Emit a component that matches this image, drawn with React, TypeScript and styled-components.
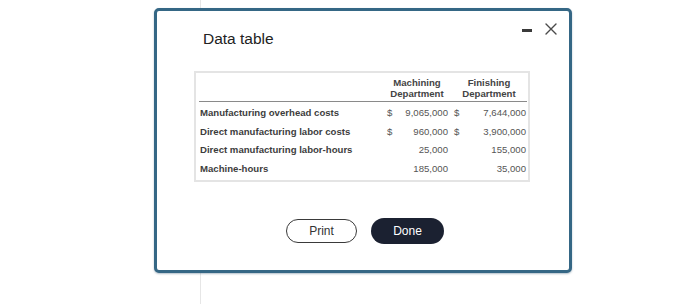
import { Fragment } from "react";
import styled, { createGlobalStyle } from "styled-components";

const GlobalStyle = createGlobalStyle`
  html, body {
    margin: 0;
    padding: 0;
    background: #ffffff;
    font-family: "Liberation Sans", Arial, sans-serif;
  }
`;

type Row = {
  label: string;
  machining: string;
  finishing: string;
  currency?: boolean;
};

const ROWS: Row[] = [
  { label: "Manufacturing overhead costs", machining: "9,065,000", finishing: "7,644,000", currency: true },
  { label: "Direct manufacturing labor costs", machining: "960,000", finishing: "3,900,000", currency: true },
  { label: "Direct manufacturing labor-hours", machining: "25,000", finishing: "155,000" },
  { label: "Machine-hours", machining: "185,000", finishing: "35,000" },
];

const Page = styled.div`
  box-sizing: border-box;
  height: 304px;
  padding: 8px 0 0 154px;
  background-image: linear-gradient(#e6e6e6, #e6e6e6);
  background-size: 1px 100%;
  background-position: 200px 0;
  background-repeat: no-repeat;
`;

const Dialog = styled.section`
  box-sizing: border-box;
  width: 418px;
  height: 265px;
  padding: 0 12px 0 37px;
  display: flex;
  flex-direction: column;
  background: #ffffff;
  border: 3px solid #356785;
  border-radius: 5px;
  box-shadow: 0 1px 2px rgba(30, 70, 100, 0.35);
`;

const Header = styled.header`
  display: flex;
  justify-content: space-between;
  align-items: flex-start;
  padding-top: 12px;
`;

const Title = styled.h2`
  margin: 7px 0 0 9px;
  font-size: 15.5px;
  line-height: 18px;
  font-weight: 400;
  color: #222222;
`;

const Controls = styled.div`
  display: flex;
  align-items: center;
  gap: 13px;
`;

const Minimize = styled.span`
  display: block;
  width: 10px;
  height: 3px;
  margin-top: 3px;
  background: #3a3a3a;
`;

const TableBox = styled.div`
  box-sizing: border-box;
  width: 336px;
  margin-top: 23px;
  padding: 0 2px 2px 3px;
  border: 2px solid #e4e4e4;
  display: grid;
  grid-template-columns: 184px 68px 76px;
  font-size: 9.6px;
`;

const HeadCell = styled.div`
  padding: 3.5px 0 2.5px;
  line-height: 11px;
  font-weight: 700;
  color: #444444;
  text-align: center;
  border-bottom: 1px solid #8a8a8a;
  margin-bottom: 2px;
`;

const Label = styled.div`
  height: 18.5px;
  line-height: 18.5px;
  padding-left: 1px;
  font-weight: 700;
  color: #3d3d3d;
  white-space: nowrap;
`;

const Value = styled.div<{ $padLeft: number; $padRight: number }>`
  height: 18.5px;
  line-height: 18.5px;
  display: flex;
  justify-content: space-between;
  padding: 0 ${(p) => p.$padRight}px 0 ${(p) => p.$padLeft}px;
  color: #555555;
  white-space: nowrap;
`;

const Actions = styled.div`
  display: flex;
  justify-content: center;
  align-items: center;
  gap: 14px;
  margin: 36px 0 0 -21px;
`;

const PillButton = styled.button<{ $primary?: boolean }>`
  box-sizing: border-box;
  width: ${(p) => (p.$primary ? "73px" : "71px")};
  height: ${(p) => (p.$primary ? "26px" : "24px")};
  border-radius: 13px;
  font-family: "Liberation Sans", Arial, sans-serif;
  font-size: 12px;
  padding: 0;
  cursor: pointer;
  color: ${(p) => (p.$primary ? "#ffffff" : "#333333")};
  background: ${(p) => (p.$primary ? "#1b2131" : "#ffffff")};
  border: ${(p) => (p.$primary ? "none" : "1.5px solid #3a3a3a")};
`;

const CloseIcon = () => (
  <svg width="12" height="12" viewBox="0 0 12 12" aria-hidden="true">
    <path d="M1 1 L11 11 M11 1 L1 11" stroke="#4a4a4a" strokeWidth="1.4" strokeLinecap="round" />
  </svg>
);

export default function App() {
  return (
    <>
      <GlobalStyle />
      <Page>
        <Dialog>
          <Header>
            <Title>Data table</Title>
            <Controls>
              <Minimize />
              <CloseIcon />
            </Controls>
          </Header>

          <TableBox>
            <HeadCell />
            <HeadCell>
              Machining
              <br />
              Department
            </HeadCell>
            <HeadCell>
              Finishing
              <br />
              Department
            </HeadCell>
            {ROWS.map((row) => (
              <Fragment key={row.label}>
                <Label>{row.label}</Label>
                <Value $padLeft={4} $padRight={3}>
                  <span>{row.currency ? "$" : ""}</span>
                  <span>{row.machining}</span>
                </Value>
                <Value $padLeft={3} $padRight={1}>
                  <span>{row.currency ? "$" : ""}</span>
                  <span>{row.finishing}</span>
                </Value>
              </Fragment>
            ))}
          </TableBox>

          <Actions>
            <PillButton type="button">Print</PillButton>
            <PillButton type="button" $primary>
              Done
            </PillButton>
          </Actions>
        </Dialog>
      </Page>
    </>
  );
}
